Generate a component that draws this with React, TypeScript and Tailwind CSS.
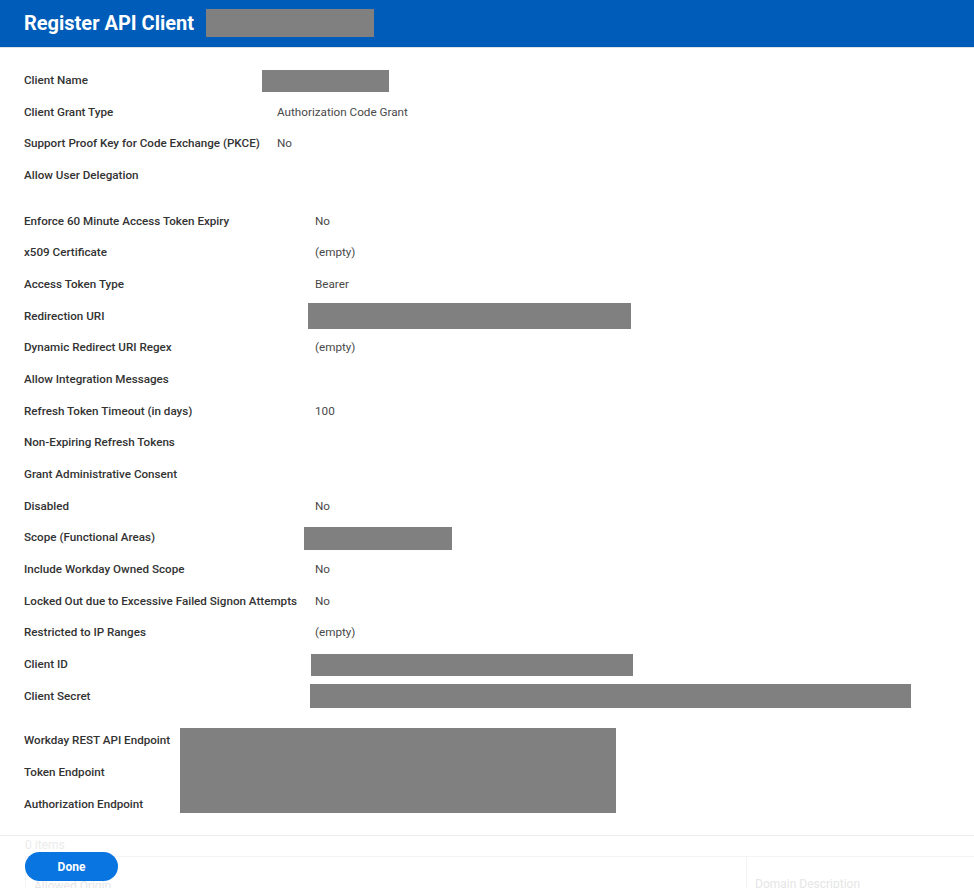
import React from "react";

type Row = {
  label: string;
  value?: string;
  // redacted value: label width and box size
  box?: { label: string; w: string; h: string };
};

const topRows: Row[] = [
  { label: "Client Name", box: { label: "w-[238px]", w: "w-[127px]", h: "h-[22px]" } },
  { label: "Client Grant Type", value: "Authorization Code Grant" },
  { label: "Support Proof Key for Code Exchange (PKCE)", value: "No" },
  { label: "Allow User Delegation" },
];

const mainRows: Row[] = [
  { label: "Enforce 60 Minute Access Token Expiry", value: "No" },
  { label: "x509 Certificate", value: "(empty)" },
  { label: "Access Token Type", value: "Bearer" },
  { label: "Redirection URI", box: { label: "w-[284px]", w: "w-[323px]", h: "h-[26px]" } },
  { label: "Dynamic Redirect URI Regex", value: "(empty)" },
  { label: "Allow Integration Messages" },
  { label: "Refresh Token Timeout (in days)", value: "100" },
  { label: "Non-Expiring Refresh Tokens" },
  { label: "Grant Administrative Consent" },
  { label: "Disabled", value: "No" },
  { label: "Scope (Functional Areas)", box: { label: "w-[280px]", w: "w-[148px]", h: "h-[23px]" } },
  { label: "Include Workday Owned Scope", value: "No" },
  { label: "Locked Out due to Excessive Failed Signon Attempts", value: "No" },
  { label: "Restricted to IP Ranges", value: "(empty)" },
  { label: "Client ID", box: { label: "w-[287px]", w: "w-[322px]", h: "h-[22px]" } },
  { label: "Client Secret", box: { label: "w-[286px]", w: "w-[601px]", h: "h-[24px]" } },
];

const FieldRow = ({ row, labelWidth }: { row: Row; labelWidth: string }) => {
  return (
    <div className="flex h-[31.67px] items-center">
      {/* label */}
      <div
        className={`shrink-0 text-[11.65px] font-medium text-[#333333] whitespace-nowrap ${
          row.box ? row.box.label : labelWidth
        }`}
      >
        {row.label}
      </div>
      {/* value */}
      {row.box ? (
        <div className={`bg-[#808080] ${row.box.w} ${row.box.h}`}></div>
      ) : (
        <div className="text-[11.7px] text-[#494949] whitespace-nowrap">{row.value}</div>
      )}
    </div>
  );
};

export default function App() {
  return (
    <div
      className="relative h-[888px] w-full overflow-hidden bg-white"
      style={{ fontFamily: "Roboto, 'Liberation Sans', sans-serif" }}
    >
      {/* header */}
      <div className="flex h-[48px] items-center gap-[12px] bg-[#005cb9] pl-[24px] pb-[1px] border-b border-[#dfe3e8]">
        <h1 className="text-[20px] font-bold text-white leading-none">Register API Client</h1>
        <div className="h-[28px] w-[168px] bg-[#808080]"></div>
      </div>

      <div className="pl-[24px] pt-[17px]">
        {/* client */}
        <div className="flex flex-col">
          {topRows.map((row) => (
            <FieldRow key={row.label} row={row} labelWidth="w-[253px]" />
          ))}
        </div>

        {/* settings */}
        <div className="mt-[14px] flex flex-col">
          {mainRows.map((row) => (
            <FieldRow key={row.label} row={row} labelWidth="w-[291px]" />
          ))}
        </div>

        {/* endpoints */}
        <div className="mt-[13px] flex items-start">
          <div className="flex w-[156px] flex-col">
            {["Workday REST API Endpoint", "Token Endpoint", "Authorization Endpoint"].map((l) => (
              <div
                key={l}
                className="flex h-[31.67px] items-center text-[11.65px] font-medium text-[#333333] whitespace-nowrap"
              >
                {l}
              </div>
            ))}
          </div>
          <div className="mt-[3px] h-[85px] w-[436px] bg-[#808080]"></div>
        </div>
      </div>

      {/* allowed origins table (faded under footer) */}
      <div className="mt-[15px] border-t border-[#ececec]">
        <p className="pl-[25px] pt-[1px] text-[12px] leading-[16px] text-[#ebebeb]">0 items</p>
        <div className="ml-[25px] mt-[3px] flex border-t border-l border-[#f4f4f4]">
          <div className="w-[721px] border-r border-[#f4f4f4] pl-[8px] pt-[21px] text-[12px] leading-[16px] text-[#e6e6e6]">
            Allowed Origin
          </div>
          <div className="flex-1 pl-[8px] pt-[19px] text-[12px] leading-[16px] text-[#e6e6e6]">
            Domain Description
          </div>
        </div>
      </div>

      {/* footer button */}
      <button className="absolute left-[25px] top-[852px] flex h-[29px] w-[93px] items-center justify-center rounded-full bg-[#0875e1] text-[12px] font-bold text-white">
        Done
      </button>
    </div>
  );
}
